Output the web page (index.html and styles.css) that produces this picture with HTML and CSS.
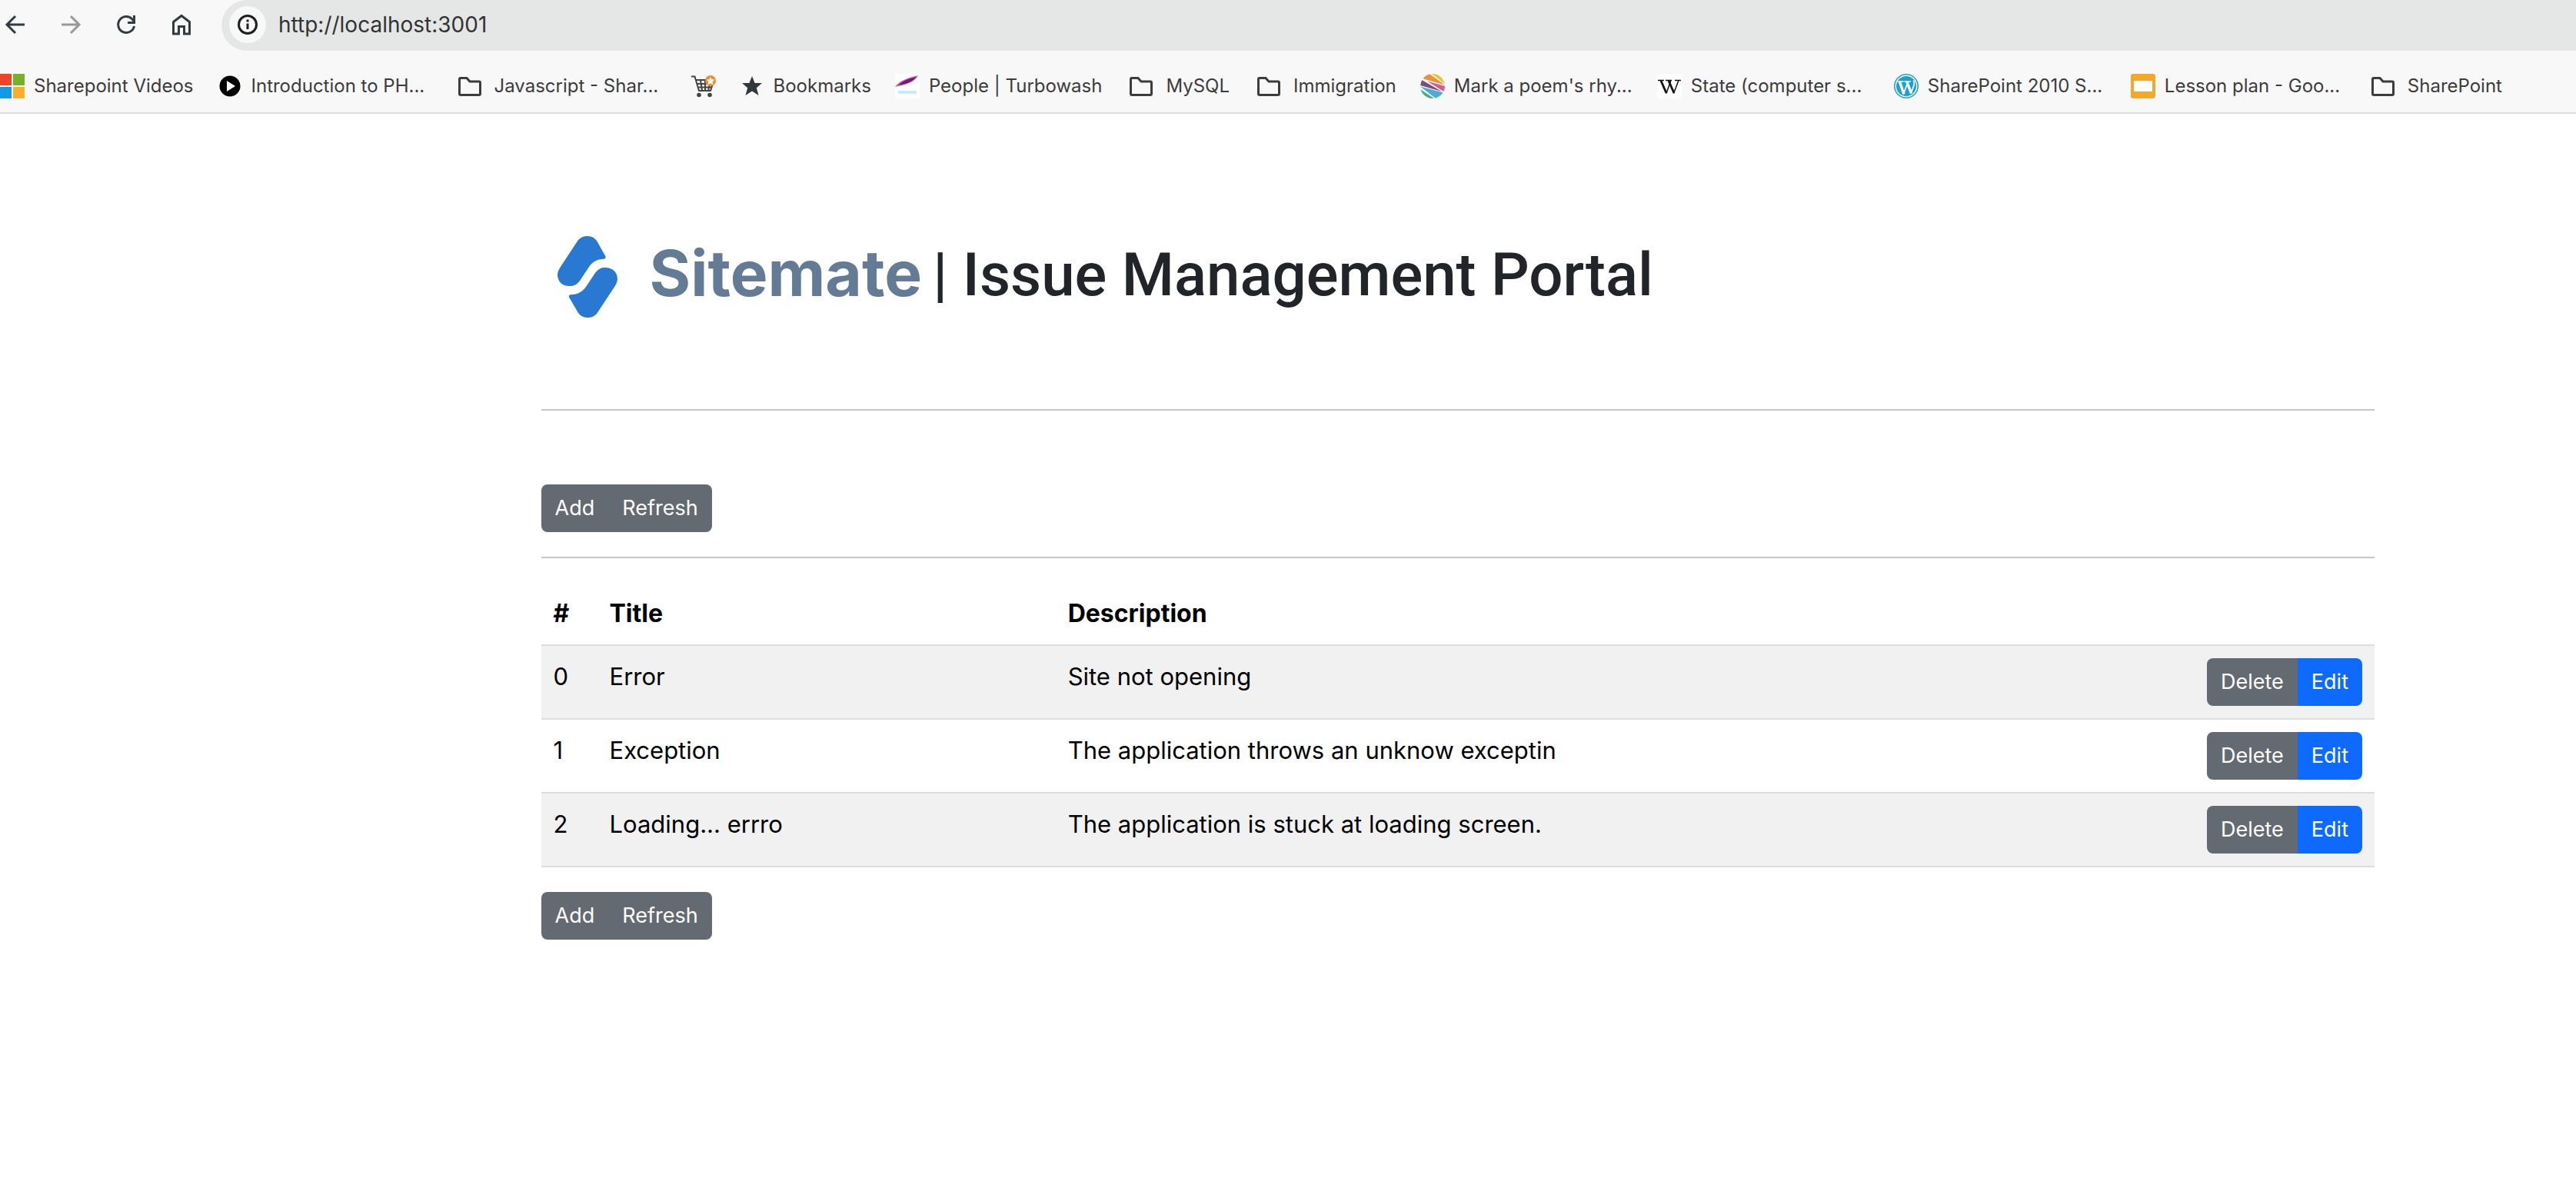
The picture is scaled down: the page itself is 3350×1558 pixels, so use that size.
FILE: index.html
```html
<!DOCTYPE html>
<html lang="en">
<head>
<meta charset="utf-8">
<title>Sitemate | Issue Management Portal</title>
<meta name="viewport" content="width=device-width, initial-scale=1">
<link rel="stylesheet" href="styles.css">
</head>
<body>
<svg class="sprite" width="0" height="0" aria-hidden="true">
  <symbol id="folder" viewBox="0 0 32 32"><path d="M3 5.500h9l4 4.500h12q1.500 0 1.500 1.500v14.500q0 1.500-1.500 1.500h-24q-1.500 0-1.500-1.500v-19q0-1.500 1.500-1.500z" fill="none" stroke="#3c3c3c" stroke-width="3"/></symbol>
</svg>

<header class="browser">
  <div class="toolbar">
    <div class="nav">
      <button type="button" class="nav-button" aria-label="Back"><svg viewBox="0 0 32 32" fill="none" stroke="#303c3f" stroke-width="3"><path d="M28 16H6M16 5L5 16l11 11"/></svg></button>
      <button type="button" class="nav-button" aria-label="Forward"><svg viewBox="0 0 32 32" fill="none" stroke="#999" stroke-width="3"><path d="M4 16h22M16 5l11 11-11 11"/></svg></button>
      <button type="button" class="nav-button" aria-label="Reload"><svg viewBox="0 0 32 32" fill="none" stroke="#303c3f" stroke-width="3"><path d="M26.500 18A10.500 10.500 0 1 1 24 9l2.500 3M26.500 4v9.500H18"/></svg></button>
      <button type="button" class="nav-button" aria-label="Home"><svg viewBox="0 0 32 32" fill="none" stroke="#303c3f" stroke-width="3"><path d="M5.500 12.500L16 4.500l10.500 8v15.500h-7v-9.500h-7V28h-7z"/></svg></button>
    </div>
    <div class="address">
      <button type="button" class="site-info" aria-label="View site information"><svg viewBox="0 0 32 32" fill="none" stroke="#1f1f1f" stroke-width="3"><circle cx="16" cy="16" r="11.500"/><path d="M16 14.500v7.500M16 9.500v3"/></svg></button>
      <input class="url" type="text" aria-label="Address" value="http://localhost:3001">
    </div>
  </div>
  <nav class="bookmarks" aria-label="Bookmarks">
    <a class="bookmark" href="#"><svg viewBox="0 0 32 32"><path fill="#f04427" d="M0 0h15v15H0z"/><path fill="#77b02a" d="M17 0h15v15H17z"/><path fill="#0f9bea" d="M0 17h15v15H0z"/><path fill="#ffae2a" d="M17 17h15v15H17z"/></svg><span>Sharepoint Videos</span></a>
    <a class="bookmark" href="#"><svg viewBox="0 0 32 32"><circle cx="16" cy="16" r="13.500" fill="#000"/><path d="M12 9l11 7-11 7z" fill="#f8f8f8"/></svg><span class="clipped">Introduction to PH...</span></a>
    <a class="bookmark folder" href="#"><svg><use href="#folder"/></svg><span class="clipped">Javascript - Shar...</span></a>
    <a class="bookmark" href="#" aria-label="Shop"><svg viewBox="0 0 32 32"><path d="M0 3.500h4.500L10 22h15l3-9" fill="none" stroke="#444" stroke-width="2"/><path d="M6 8h14M7.500 13h18M9 17.500h18M12 8l2 14M18 8v14M24 13l-2 9" fill="none" stroke="#444" stroke-width="2"/><circle cx="10" cy="27.500" r="2.800" fill="#444"/><circle cx="24" cy="27.500" r="2.800" fill="#444"/><circle cx="25" cy="9" r="7" fill="#f6882b"/><path d="M25 3.500l1.600 3.700 4 .4-3 2.700.9 4L25 12.200l-3.500 2.100.9-4-3-2.700 4-.4z" fill="#fff"/></svg></a>
    <a class="bookmark" href="#"><svg viewBox="0 0 32 32"><path d="M16 3l3.600 9h9.400l-7.200 6.200L24.500 28 16 22.600 7.500 28l2.700-9.800L3 12h9.400z" fill="#30383b"/></svg><span>Bookmarks</span></a>
    <a class="bookmark" href="#"><svg viewBox="0 0 32 32"><path fill="#fff" d="M0 0h32v32H0z"/><path d="M0 17C5 9 17 5 30 2c-4 8-14 12-30 15z" fill="#c06a9c"/><path d="M4 15C10 9 18 6 28 4c-5 6-12 9-24 11z" fill="#7a1480"/><path d="M4 24h24" stroke="#c9e9f5" stroke-width="4"/></svg><span>People | Turbowash</span></a>
    <a class="bookmark folder" href="#"><svg><use href="#folder"/></svg><span>MySQL</span></a>
    <a class="bookmark folder" href="#"><svg><use href="#folder"/></svg><span>Immigration</span></a>
    <a class="bookmark" href="#"><svg viewBox="0 0 32 32"><defs><clipPath id="ball"><circle cx="16" cy="16" r="16"/></clipPath></defs><g clip-path="url(#ball)"><path fill="#f8f8f8" d="M0 0h32v32H0z"/><path fill="#e3c437" d="M15 0h17v13z"/><path fill="#ee9136" d="M12 0l20 14.500L4 6.500l2-6.500z"/><path fill="#da5a8f" d="M9 9.500l23 6.500v8z"/><path fill="#7d4a86" d="M2 8l26 15L0 15z"/><path fill="#49aed6" d="M0 16.500l30 8-6 7.500h-4z"/><path fill="#4aab84" d="M0 20l18 12H0z"/></g></svg><span class="clipped">Mark a poem's rhy...</span></a>
    <a class="bookmark" href="#"><svg viewBox="0 0 32 32"><rect width="32" height="32" rx="4" fill="#fff"/><path d="M1 8.500h8M11 8.500h8M23 8.500h8M18 8.500l-6 17M28 8.500l-6.500 17" fill="none" stroke="#111" stroke-width="1.500"/><path d="M5 9l7 16M15 9l7 16" fill="none" stroke="#111" stroke-width="2.800"/></svg><span class="clipped">State (computer s...</span></a>
    <a class="bookmark" href="#"><svg viewBox="0 0 32 32"><circle cx="16" cy="16" r="16" fill="#1ba0d0"/><circle cx="16" cy="16" r="13.700" fill="none" stroke="#fff" stroke-width="1.500"/><path d="M4.500 10h8M13.500 10h8.500" fill="none" stroke="#fff" stroke-width="1.500"/><path d="M7.500 10.500l5.500 16M17 10.500l5.500 15" fill="none" stroke="#fff" stroke-width="3.400"/><path d="M12.500 26l4.500-12M22 25.500L26 15q1-3-.5-6.500" fill="none" stroke="#fff" stroke-width="1.800"/></svg><span class="clipped">SharePoint 2010 S...</span></a>
    <a class="bookmark" href="#"><svg viewBox="0 0 32 32"><rect width="32" height="32" rx="3" fill="#f3a829"/><path d="M4 9h24v14H4z" fill="#fff"/></svg><span class="clipped">Lesson plan - Goo...</span></a>
    <a class="bookmark folder" href="#"><svg><use href="#folder"/></svg><span>SharePoint</span></a>
  </nav>
</header>

<main class="page">
  <h1 class="title">
    <span class="brand">
      <svg class="brand-mark" viewBox="0 0 78 106" aria-hidden="true"><g fill="#2979d3" transform="scale(1 .93)"><path d="M27 5.500Q31.500 0 39 0T51 6.500L62.500 28.500q.5 3-1.500 3.500C51 32 45 37 41 43L29 62.500C25 68 21 70 15.500 70 6 70 0 63 0 54q0-5 3-9.500z"/><path d="M51 108.500Q46.500 114 39 114T27 107.500L15 85.500q-.5-3 1.500-3.500C27 82 33 77 37 71L49 51.500C53 46 57 44 62 44 72 44 78 51 78 60q0 5-3 9.500z"/></g></svg>
      <span class="brand-name">Sitemate</span>
    </span>
    <span class="title-text">| Issue Management Portal</span>
  </h1>
  <hr>
  <div class="button-group spaced">
    <button type="button" class="button">Add</button><button type="button" class="button">Refresh</button>
  </div>
  <hr>
  <table class="issues">
    <thead>
      <tr><th class="col-id">#</th><th class="col-title">Title</th><th>Description</th><th></th></tr>
    </thead>
    <tbody>
      <tr><td>0</td><td>Error</td><td>Site not opening</td><td class="actions"><div class="button-group"><button type="button" class="button">Delete</button><button type="button" class="button primary">Edit</button></div></td></tr>
      <tr><td>1</td><td>Exception</td><td>The application throws an unknow exceptin</td><td class="actions"><div class="button-group"><button type="button" class="button">Delete</button><button type="button" class="button primary">Edit</button></div></td></tr>
      <tr><td>2</td><td>Loading... errro</td><td>The application is stuck at loading screen.</td><td class="actions"><div class="button-group"><button type="button" class="button">Delete</button><button type="button" class="button primary">Edit</button></div></td></tr>
    </tbody>
  </table>
  <div class="button-group">
    <button type="button" class="button">Add</button><button type="button" class="button">Refresh</button>
  </div>
</main>
</body>
</html>
```
FILE: styles.css
```css
* { box-sizing: border-box; }

body {
  margin: 0;
  background: #fff;
  color: #000;
  font: 31px/48px Inter, "Liberation Sans", sans-serif;
}

button { font: inherit; border: 0; padding: 0; cursor: pointer; }

.sprite { display: block; }

/* Browser bar */
.browser {
  background: #f8f8f8;
  border-bottom: 2px solid #dcdddd;
}

.toolbar { display: flex; }

.nav {
  display: flex;
  align-items: center;
  gap: 40px;
  padding: 0 36px 2px 4px;
}

.nav-button { width: 32px; height: 32px; background: none; }

.nav-button svg,
.site-info svg { display: block; width: 32px; height: 32px; }

.address {
  display: flex;
  flex: 1;
  align-items: center;
  gap: 16px;
  padding: 0 10px 2px;
  height: 66px;
  background: #e5e7e6;
  border-radius: 34px 0 0 34px;
}

.site-info {
  display: grid;
  place-items: center;
  width: 48px;
  height: 48px;
  border-radius: 24px;
  background: #f8f8f8;
}

.url {
  flex: 1;
  padding: 0;
  border: 0;
  background: none;
  color: #333;
  font: 28px/32px Inter, "Liberation Sans", sans-serif;
}

.bookmarks {
  display: flex;
  align-items: center;
  gap: 31px;
  height: 80px;
  padding-top: 12px;
  overflow: hidden;
}

.bookmark {
  display: flex;
  flex: none;
  align-items: center;
  gap: 12px;
  color: #3c3c3c;
  font-size: 24px;
  line-height: 32px;
  text-decoration: none;
  white-space: nowrap;
}

.bookmark svg { width: 32px; height: 32px; }

.folder { gap: 16px; padding-left: 4px; }

.clipped { width: 233px; }

.folder .clipped { width: 225px; }

/* Issue portal */
.page { margin: 0 262px 0 21%; }

.title {
  display: flex;
  align-items: center;
  gap: 14px;
  margin: 0;
  padding: 148px 0 108px 21px;
  color: #212529;
  font-size: 78px;
  font-weight: 500;
  line-height: 120px;
}

.title-text {
  padding-bottom: 4px;
  font-family: Roboto, Inter, sans-serif;
}

.brand { display: flex; align-items: center; gap: 42px; }

.brand-mark { width: 78px; height: 106px; }

.brand-name {
  padding-bottom: 8px;
  color: #647b95;
  font-size: 82px;
  font-weight: 700;
}

hr {
  height: 2px;
  margin: 0 0 32px;
  border: 0;
  background: #c8c8c8;
}

.button-group { display: flex; }

.spaced { padding: 64px 0 32px; }

.button {
  padding: 10px 18px;
  background: #636a71;
  color: #fff;
  font-size: 27px;
  line-height: 42px;
}

.button:first-child { border-radius: 8px 0 0 8px; }
.button:last-child { border-radius: 0 8px 8px 0; }
.primary { background: #0d6afd; }

.issues {
  width: 100%;
  margin-bottom: 32px;
  border-collapse: separate;
  border-spacing: 0;
}

.issues th,
.issues td {
  padding: 16px;
  border-bottom: 2px solid #dadfe3;
  text-align: left;
  vertical-align: top;
}

.issues th { font-size: 32px; font-weight: 700; }
.issues tbody tr:nth-child(odd) { background: #f1f1f1; }
.issues .col-id { width: 73px; }
.col-title { width: 25%; }
.actions .button-group { justify-content: flex-end; }
```
